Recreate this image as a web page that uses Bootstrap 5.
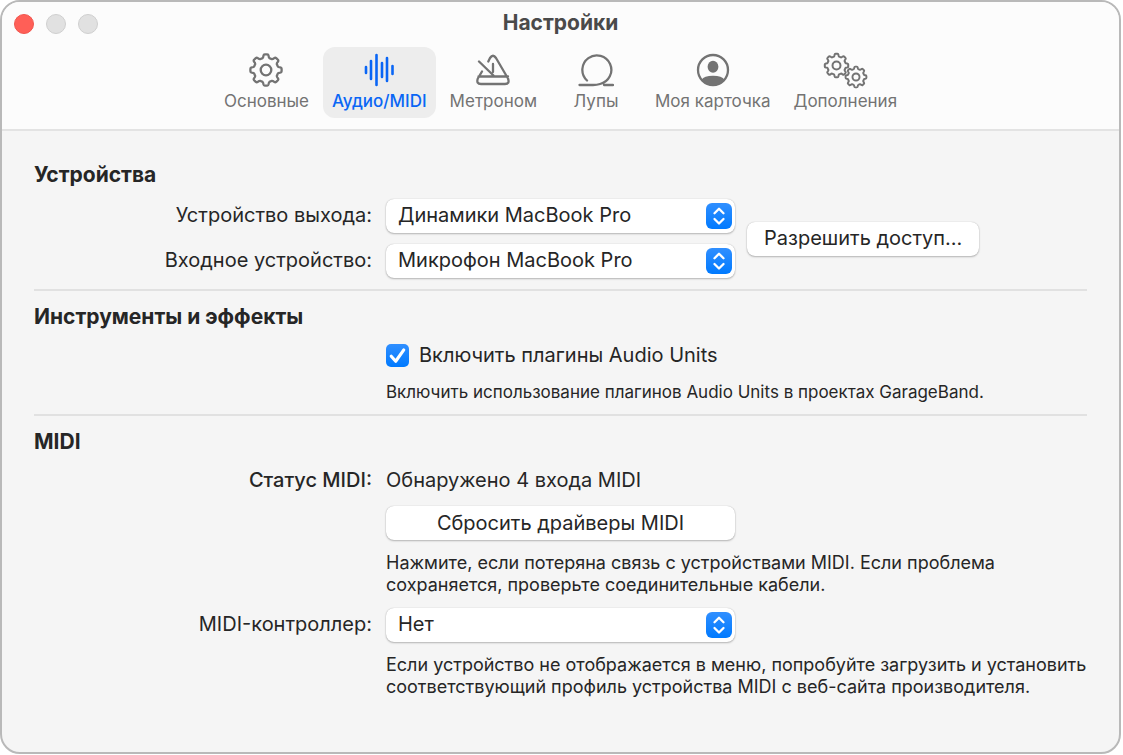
<!DOCTYPE html>
<html lang="ru">
<head>
<meta charset="utf-8">
<meta name="viewport" content="width=device-width, initial-scale=1">
<title>Настройки</title>
<link href="https://cdn.jsdelivr.net/npm/bootstrap@5.3.0/dist/css/bootstrap.min.css" rel="stylesheet">
<style>
  body { font-family: Inter, "Liberation Sans", sans-serif; font-size: 20px; line-height: 24px; color: #262626; background: #fff; padding: 0 2px 1px 0; }
  .app-window { min-height: calc(100vh - 1px); border: 2px solid #b9b9b9; border-radius: 20px; background: #f5f5f5; overflow: hidden; }
  .app-header { background: #fcfcfc; border-bottom: 2px solid #e3e3e3; padding-bottom: 11px; }
  .title-row { display: grid; grid-template-columns: 1fr auto 1fr; align-items: center; height: 45px; padding: 0 12px 2px; }
  .title-row h1 { font-size: 21px; line-height: 24px; font-weight: 700; color: #4a4a4a; padding-bottom: 2px; }
  .lights { gap: 12px; }
  .light { width: 20px; height: 20px; border-radius: 50%; border: 1px solid #cfcfcf; background: #e1e1e1; padding: 0; }
  .light-close { background: #ff5f57; border-color: #f0554e; }
  .tab-list { gap: 5px; }
  .tab-btn { display: flex; flex-direction: column; align-items: center; min-width: 90px; height: 71px; padding: 4px 9px 0; border: 0; border-radius: 12px; background: transparent; color: #737373; font-size: 17px; line-height: 24px; white-space: nowrap; }
  .tab-btn svg { height: 38px; fill: none; stroke: currentColor; stroke-width: 2.3; stroke-linecap: round; stroke-linejoin: round; }
  .tab-btn.active { background: #ededed; color: #0a66f5; font-weight: 500; }
  .app-body { padding: 32px; }
  .app-body h2 { font-size: 21px; line-height: 24px; font-weight: 700; margin-bottom: 14px; }
  .app-body hr { margin: 11px 0 14px; border-top: 2px solid #e1e1e1; opacity: 1; }
  .form-grid { display: grid; grid-template-columns: 338px minmax(0, 1fr); column-gap: 14px; row-gap: 12px; align-items: center; }
  .effects-grid { row-gap: 14px; }
  .field-name { text-align: right; padding-bottom: 2px; }
  .status-text { padding-bottom: 2px; }
  .device-fields { display: grid; grid-template-columns: 338px 349px auto; column-gap: 14px; row-gap: 11px; align-items: center; justify-content: start; margin-top: -2px; }
  .device-fields .mac-btn { grid-column: 3; grid-row: 1 / 3; padding: 0 17px 2px; margin-left: -2px; }
  .mac-btn, .mac-select { height: 34px; border: 0; border-radius: 8px; background-color: #fff; color: #262626; font-size: 20px; line-height: 24px; box-shadow: 0 0 1px rgba(0,0,0,.25), 0 1px 2px rgba(0,0,0,.25); }
  .mac-select { width: 349px; padding: 4px 40px 6px 12px; background-size: 26px 26px; background-position: right 3px center; background-image: url("data:image/svg+xml,%3Csvg xmlns='http://www.w3.org/2000/svg' viewBox='0 0 26 26'%3E%3Cdefs%3E%3ClinearGradient id='g' x2='0' y2='1'%3E%3Cstop stop-color='%23308fff'/%3E%3Cstop offset='1' stop-color='%23007aff'/%3E%3C/linearGradient%3E%3C/defs%3E%3Crect width='26' height='26' rx='6' fill='url(%23g)'/%3E%3Cpath d='M8.500 10.200 13 5.700l4.500 4.500M8.500 16 13 20.500l4.500-4.500' fill='none' stroke='white' stroke-width='2.300' stroke-linecap='round' stroke-linejoin='round'/%3E%3C/svg%3E"); }
  .wide-btn { width: 349px; padding-bottom: 2px; }
  .check-line { gap: 10px; min-height: 24px; margin: 0; padding: 0; }
  .check-line .form-check-input { float: none; width: 23px; height: 23px; margin: 0; border: 0; border-radius: 5px; }
  .check-line .form-check-input:checked { background-color: #007aff; background-image: url("data:image/svg+xml,%3Csvg xmlns='http://www.w3.org/2000/svg' viewBox='0 0 22 22'%3E%3Cpath d='M5 11.700 9.300 16.500 17 5.700' fill='none' stroke='white' stroke-width='3' stroke-linecap='round' stroke-linejoin='round'/%3E%3C/svg%3E"), linear-gradient(#308fff, #007aff); }
  .hint { font-size: 18px; line-height: 22px; grid-column: 2; margin: 0; }
  .effects-grid .hint { font-size: 17px; }
</style>
</head>
<body>
<svg width="0" height="0" class="position-absolute" aria-hidden="true">
  <symbol id="gear" viewBox="-18 -18 36 36">
    <path d="M-3.400-11.900Q-2.800-12.300-2.600-14.200Q-2.400-15.600-1.200-15.600H1.200Q2.400-15.600 2.600-14.200Q2.800-12.300 3.400-11.900L6-10.800Q6.800-10.700 8.200-11.900Q9.300-12.700 10.200-11.900L11.900-10.200Q12.700-9.300 11.900-8.200Q10.700-6.800 10.800-6L11.900-3.400Q12.300-2.800 14.200-2.600Q15.600-2.400 15.600-1.200V1.200Q15.600 2.400 14.200 2.600Q12.300 2.800 11.900 3.400L10.800 6Q10.700 6.800 11.900 8.200Q12.700 9.300 11.900 10.200L10.200 11.900Q9.300 12.700 8.200 11.900Q6.800 10.700 6 10.800L3.400 11.900Q2.800 12.300 2.600 14.200Q2.400 15.600 1.200 15.600H-1.200Q-2.400 15.600-2.600 14.200Q-2.800 12.300-3.400 11.900L-6 10.800Q-6.800 10.700-8.200 11.900Q-9.300 12.700-10.200 11.900L-11.900 10.200Q-12.700 9.300-11.900 8.200Q-10.700 6.800-10.800 6L-11.900 3.400Q-12.300 2.800-14.200 2.600Q-15.600 2.400-15.600 1.200V-1.200Q-15.600-2.400-14.200-2.600Q-12.300-2.800-11.900-3.400L-10.800-6Q-10.700-6.800-11.900-8.200Q-12.700-9.300-11.900-10.200L-10.200-11.900Q-9.300-12.700-8.200-11.900Q-6.800-10.700-6-10.800Z"/>
    <circle r="5.300"/>
  </symbol>
</svg>
<main class="app-window">
  <header class="app-header">
    <div class="title-row">
      <div class="lights d-flex">
        <button type="button" class="light light-close" aria-label="Закрыть"></button>
        <button type="button" class="light" aria-label="Свернуть"></button>
        <button type="button" class="light" aria-label="Увеличить"></button>
      </div>
      <h1 class="m-0">Настройки</h1>
      <div></div>
    </div>
    <nav class="tab-list d-flex justify-content-center">
      <button type="button" class="tab-btn"><svg width="36" viewBox="0 0 36 38"><use href="#gear" x="0" y="1" width="36" height="36"/></svg>Основные</button>
      <button type="button" class="tab-btn active" aria-current="page"><svg width="36" viewBox="0 0 36 38"><path stroke-width="2.600" d="M5 16v6M10 10v18M15.500 4v30M21 12v14M26 7v23M31.500 15v8"/></svg>Аудио/MIDI</button>
      <button type="button" class="tab-btn"><svg width="36" viewBox="0 0 36 38"><path d="M13.300 10.500 15 7Q18 2.500 21 7L33 27.500Q35 33 30 33H6Q1 33 2.800 27.500L7 20.500M4 10.500 18.500 24.500M3.500 25.500H33M18 13v8"/></svg>Метроном</button>
      <button type="button" class="tab-btn"><svg width="36" viewBox="0 0 36 38"><path d="M1.500 34H15Q19 34 22 33A14.500 14.500 0 1 0 9 29.500M26 34h9"/></svg>Лупы</button>
      <button type="button" class="tab-btn"><svg width="36" viewBox="0 0 36 38"><circle cx="18" cy="19" r="15"/><g fill="currentColor" stroke="none"><ellipse cx="18" cy="15.700" rx="5.400" ry="6"/><path d="M6.500 29Q9 24.800 18 24.800T29.500 29Q25 34.500 18 34.500T6.500 29Z"/></g></svg>Моя карточка</button>
      <button type="button" class="tab-btn"><svg width="46" viewBox="0 0 46 38"><use href="#gear" x="1" y="1" width="27" height="27" stroke-width="2.700"/><use href="#gear" x="22" y="14" width="24" height="24" stroke-width="2.900"/></svg>Дополнения</button>
    </nav>
  </header>

  <div class="app-body">
    <section>
      <h2>Устройства</h2>
      <div class="device-fields">
        <label class="field-name" for="output">Устройство выхода:</label>
        <select id="output" class="form-select mac-select"><option>Динамики MacBook Pro</option></select>
        <label class="field-name" for="input">Входное устройство:</label>
        <select id="input" class="form-select mac-select"><option>Микрофон MacBook Pro</option></select>
        <button type="button" class="mac-btn">Разрешить доступ...</button>
      </div>
    </section>
    <hr>
    <section>
      <h2>Инструменты и эффекты</h2>
      <div class="form-grid effects-grid">
        <div></div>
        <div class="form-check check-line d-flex align-items-center">
          <input class="form-check-input" type="checkbox" id="units" checked>
          <label for="units">Включить плагины Audio Units</label>
        </div>
        <p class="hint">Включить использование плагинов Audio Units в проектах GarageBand.</p>
      </div>
    </section>
    <hr>
    <section>
      <h2>MIDI</h2>
      <div class="form-grid">
        <div class="field-name fw-medium">Статус MIDI:</div>
        <div class="status-text">Обнаружено 4 входа MIDI</div>
        <div></div>
        <div><button type="button" class="mac-btn wide-btn d-block">Сбросить драйверы MIDI</button></div>
        <p class="hint">Нажмите, если потеряна связь с устройствами MIDI. Если проблема<br>сохраняется, проверьте соединительные кабели.</p>
        <label class="field-name" for="controller">MIDI-контроллер:</label>
        <select id="controller" class="form-select mac-select"><option>Нет</option></select>
        <p class="hint">Если устройство не отображается в меню, попробуйте загрузить и установить<br>соответствующий профиль устройства MIDI с веб-сайта производителя.</p>
      </div>
    </section>
  </div>
</main>
<script src="https://cdn.jsdelivr.net/npm/bootstrap@5.3.0/dist/js/bootstrap.bundle.min.js"></script>
</body>
</html>
